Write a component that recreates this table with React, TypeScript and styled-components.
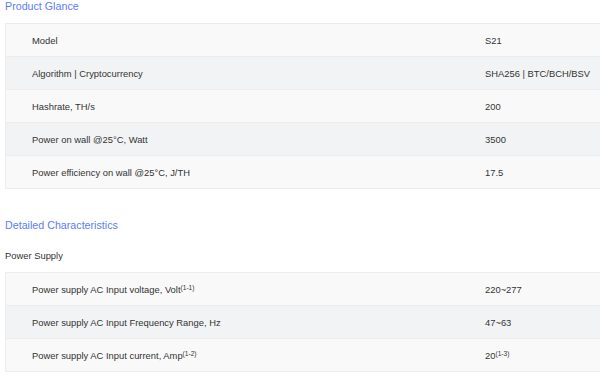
import * as React from "react";
import styled, { createGlobalStyle } from "styled-components";

const GlobalStyle = createGlobalStyle`
  html, body {
    margin: 0;
    padding: 0;
    background: #fff;
    overflow: hidden;
  }
  body {
    font-family: "Liberation Sans", Arial, sans-serif;
    color: #333;
  }
`;

const Page = styled.div`
  display: flex;
  flex-direction: column;
  gap: 30px;
  padding-left: 5px;
  width: 620px;
`;

const Section = styled.section`
  display: flex;
  flex-direction: column;
`;

const SectionTitle = styled.div`
  height: 12px;
  line-height: 12px;
  font-size: 10.7px;
  color: #5b7df5;
  margin-bottom: 11px;
`;

const GroupTitle = styled.div`
  height: 12px;
  line-height: 12px;
  font-size: 9.4px;
  color: #333;
  margin: 8px 0 10px;
`;

const Table = styled.div`
  display: flex;
  flex-direction: column;
  border: 1px solid #ededed;
  border-right: none;
`;

const Row = styled.div<{ $even: boolean }>`
  display: grid;
  grid-template-columns: 479px 1fr;
  align-items: center;
  height: 32px;
  font-size: 9.4px;
  color: #333;
  background: ${(p) => (p.$even ? "#f2f3f5" : "#f9f9f9")};
  & + & {
    border-top: 1px solid #ededed;
  }
`;

const Label = styled.div`
  padding-left: 26px;
`;

const Value = styled.div``;

const Sup = styled.sup`
  font-size: 6.6px;
  line-height: 0;
  vertical-align: 3.5px;
`;

interface ISpec {
  label: React.ReactNode;
  value: React.ReactNode;
}

const glance: ISpec[] = [
  { label: "Model", value: "S21" },
  { label: "Algorithm | Cryptocurrency", value: "SHA256 | BTC/BCH/BSV" },
  { label: "Hashrate, TH/s", value: "200" },
  { label: "Power on wall @25°C, Watt", value: "3500" },
  { label: "Power efficiency on wall @25°C, J/TH", value: "17.5" }
];

const powerSupply: ISpec[] = [
  {
    label: (
      <>
        Power supply AC Input voltage, Volt<Sup>(1-1)</Sup>
      </>
    ),
    value: "220~277"
  },
  { label: "Power supply AC Input Frequency Range, Hz", value: "47~63" },
  {
    label: (
      <>
        Power supply AC Input current, Amp<Sup>(1-2)</Sup>
      </>
    ),
    value: (
      <>
        20<Sup>(1-3)</Sup>
      </>
    )
  }
];

const SpecTable = ({ rows }: { rows: ISpec[] }) => (
  <Table>
    {rows.map((r, i) => (
      <Row key={i} $even={i % 2 === 1}>
        <Label>{r.label}</Label>
        <Value>{r.value}</Value>
      </Row>
    ))}
  </Table>
);

export default function App() {
  return (
    <>
      <GlobalStyle />
      <Page>
        <Section>
          <SectionTitle>Product Glance</SectionTitle>
          <SpecTable rows={glance} />
        </Section>
        <Section>
          <SectionTitle>Detailed Characteristics</SectionTitle>
          <GroupTitle>Power Supply</GroupTitle>
          <SpecTable rows={powerSupply} />
        </Section>
      </Page>
    </>
  );
}
